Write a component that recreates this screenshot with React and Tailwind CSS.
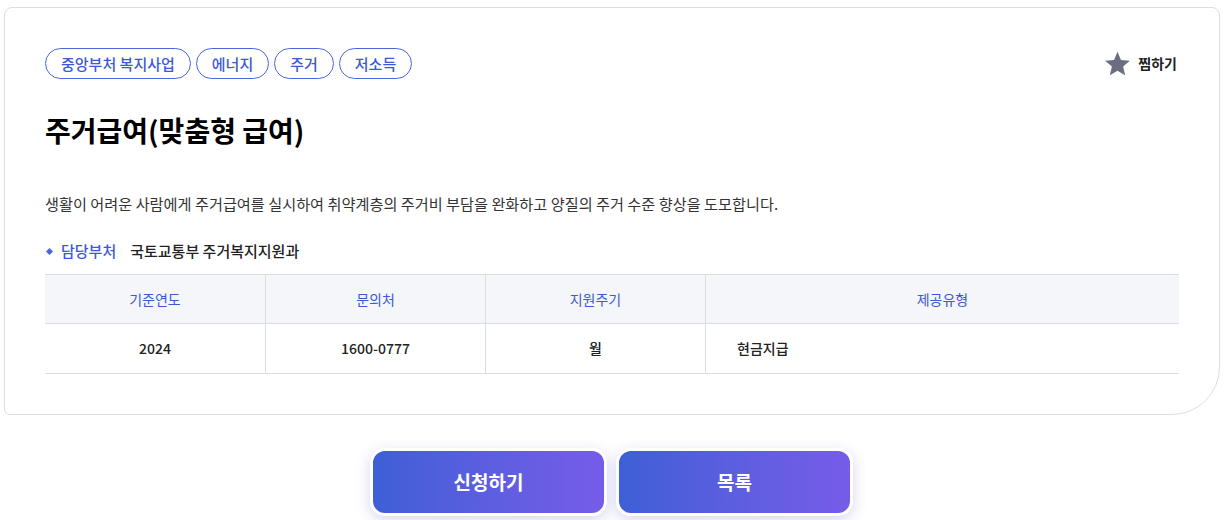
const tags = ['중앙부처 복지사업', '에너지', '주거', '저소득']

const cols = [
  { head: '기준연도', value: '2024', w: 'w-[220px]', center: true },
  { head: '문의처', value: '1600-0777', w: 'w-[220px]', center: true },
  { head: '지원주기', value: '월', w: 'w-[220px]', center: true },
  { head: '제공유형', value: '현금지급', w: 'flex-1', center: false },
]

function Star() {
  return (
    <svg width="27" height="27" viewBox="0 0 24 24" fill="#6b6e82">
      <path d="M12 1.5l3.1 7.3 7.9.7-6 5.2 1.8 7.8L12 18.4l-6.8 4.1L7 14.7 1 9.5l7.9-.7z" />
    </svg>
  )
}

export default function App() {
  return (
    <div className="w-[1229px] h-[520px] bg-white overflow-hidden font-['Noto_Sans_CJK_KR','Noto_Sans',sans-serif] text-[#222]">
      {/* ── Card ── */}
      <div className="ml-[4px] mt-[7px] w-[1216px] border border-[#dedede] rounded-tl-[8px] rounded-tr-[8px] rounded-bl-[6px] rounded-br-[48px] p-[40px]">
        <div className="flex items-center justify-between">
          <div className="flex gap-[5px]">
            {tags.map(t => (
              <span key={t} className="h-[31px] px-[15px] flex items-center rounded-full border border-[#4a67d9] text-[#3b59d4] text-[15px] font-medium leading-none">
                {t}
              </span>
            ))}
          </div>
          <button className="flex items-center gap-[7px] mr-[2px] text-[14px] font-bold text-[#222]">
            <Star />
            <span>찜하기</span>
          </button>
        </div>

        <h1 className="mt-[32px] text-[28px] font-bold leading-[39px] text-black">주거급여(맞춤형 급여)</h1>

        <p className="mt-[42px] text-[15.2px] leading-[22px] text-[#333]">
          생활이 어려운 사람에게 주거급여를 실시하여 취약계층의 주거비 부담을 완화하고 양질의 주거 수준 향상을 도모합니다.
        </p>

        <div className="mt-[26px] flex items-center text-[15px] leading-[22px]">
          <span className="w-[5px] h-[5px] bg-[#4a67d9] rotate-45 ml-[2px] mr-[9px]" />
          <span className="text-[#3b59d4] font-medium">담당부처</span>
          <span className="ml-[14px] font-medium text-[#222]">국토교통부 주거복지지원과</span>
        </div>

        <div className="mt-[12px] border-t border-b border-[#dcdde2]">
          <div className="flex bg-[#f5f6fa] border-b border-[#dcdde2] h-[49px]">
            {cols.map((c, i) => (
              <div key={c.head} className={`${c.w} flex items-center justify-center text-[14px] text-[#3b59d4] ${i > 0 ? 'border-l border-[#dcdde2]' : ''}`}>
                {c.head}
              </div>
            ))}
          </div>
          <div className="flex h-[49px]">
            {cols.map((c, i) => (
              <div key={c.head} className={`${c.w} flex items-center ${c.center ? 'justify-center' : 'justify-start pl-[31px]'} text-[14px] font-medium text-[#222] ${i > 0 ? 'border-l border-[#dcdde2]' : ''}`}>
                {c.value}
              </div>
            ))}
          </div>
        </div>
      </div>

      {/* ── Buttons ── */}
      <div className="mt-[33px] flex justify-center gap-[9px] pr-[6px]">
        {['신청하기', '목록'].map(b => (
          <button key={b} className="w-[237px] h-[68px] shrink-0 rounded-[15px] border-[3px] border-white bg-gradient-to-r from-[#3d5fd7] to-[#765ce9] text-white text-[19px] font-bold shadow-[0_4px_14px_rgba(90,90,200,0.25)]">
            {b}
          </button>
        ))}
      </div>
    </div>
  )
}
